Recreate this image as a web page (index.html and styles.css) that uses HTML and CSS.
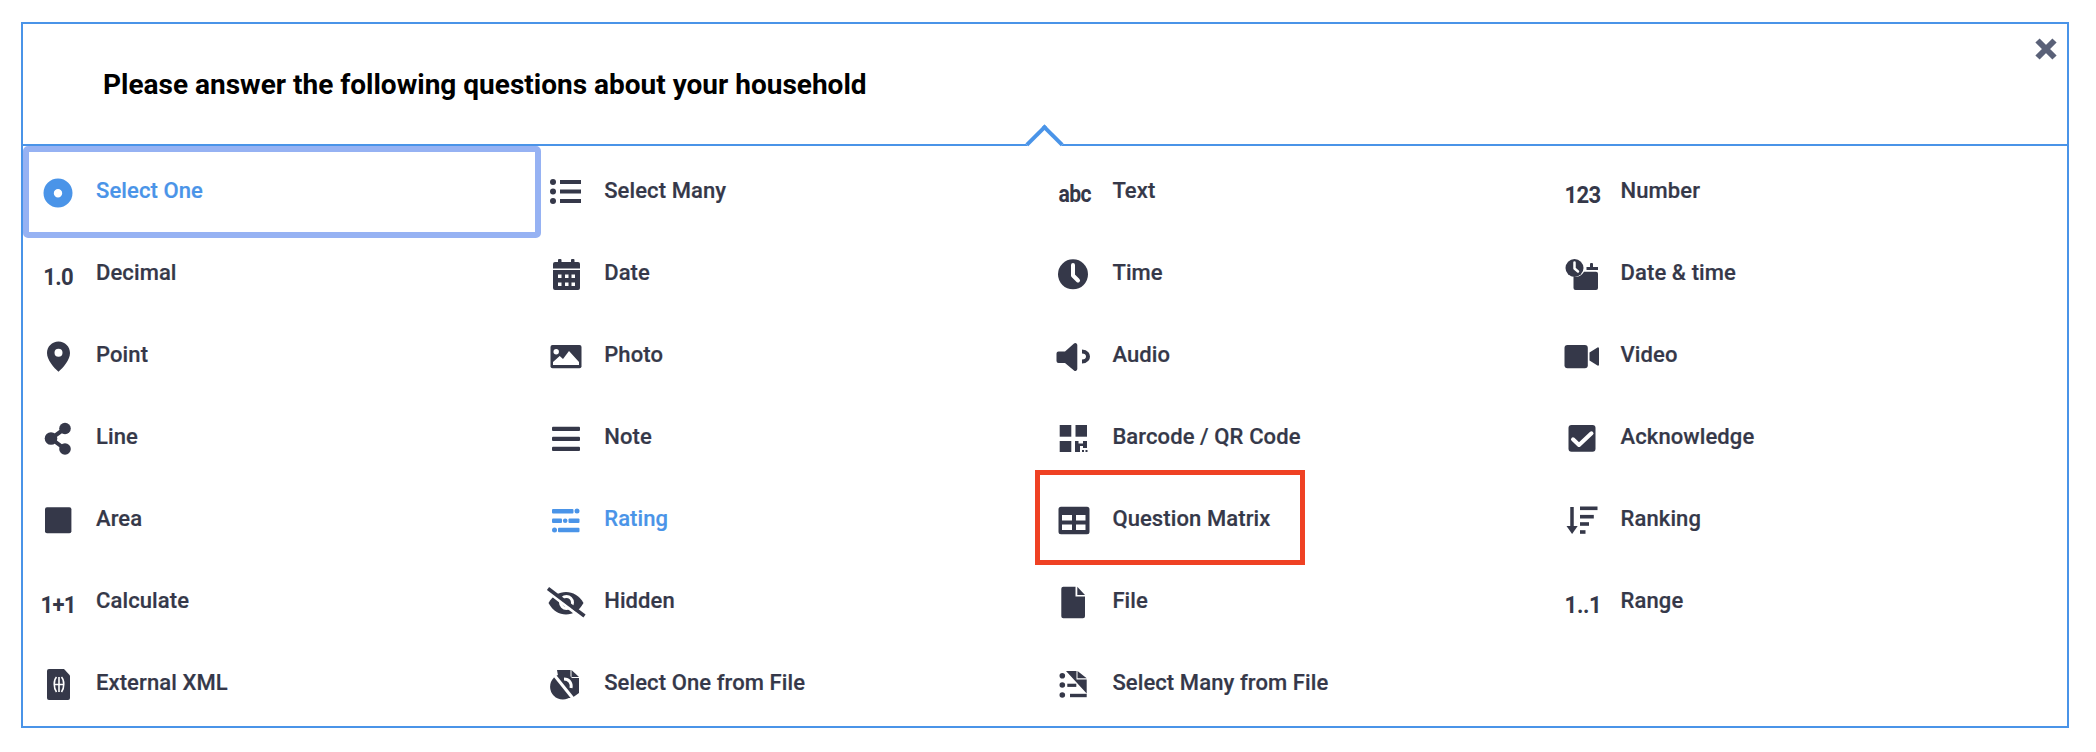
FILE: index.html
```html
<!DOCTYPE html>
<html lang="en">
<head>
    <meta charset="UTF-8">
    <title>Question types</title>
    <link rel="stylesheet" href="styles.css">
</head>
<body>
    <div class="chooser">
        <div class="chooser-head">
            <h1 class="chooser-title">Please answer the following questions about your household</h1>
            <span class="chooser-caret"></span>
            <svg class="chooser-close" viewBox="0 0 24 24"><path d="M3.5 3.5l17 17M20.5 3.5l-17 17"/></svg>
        </div>

        <div class="type-grid">
            <!-- row 1 -->
            <div class="type-item is-selected is-accent">
                <span class="type-icon"><svg viewBox="0 0 36 36"><path fill-rule="evenodd" d="M18 5.5a14.5 14.5 0 1 0 0 29 14.5 14.5 0 0 0 0-29zm0 10.500a4.200 4.200 0 1 1 0 8.400 4.200 4.200 0 0 1 0-8.400z"/></svg></span>
                <span class="type-label">Select One</span>
            </div>
            <div class="type-item">
                <span class="type-icon"><svg viewBox="0 0 36 36"><circle cx="5" cy="9" r="3"/><circle cx="5" cy="18.500" r="3"/><circle cx="5" cy="28" r="3"/><rect x="12" y="7" width="21" height="4"/><rect x="12" y="16.500" width="21" height="4"/><rect x="12" y="26" width="21" height="4"/></svg></span>
                <span class="type-label">Select Many</span>
            </div>
            <div class="type-item">
                <span class="type-icon"><span class="icon-text icon-abc">abc</span></span>
                <span class="type-label">Text</span>
            </div>
            <div class="type-item">
                <span class="type-icon"><span class="icon-text">123</span></span>
                <span class="type-label">Number</span>
            </div>

            <!-- row 2 -->
            <div class="type-item">
                <span class="type-icon"><span class="icon-text">1.0</span></span>
                <span class="type-label">Decimal</span>
            </div>
            <div class="type-item">
                <span class="type-icon"><svg viewBox="0 0 36 36"><rect x="10" y="4" width="3.500" height="5" rx="1"/><rect x="23" y="4" width="3.500" height="5" rx="1"/><path d="M7 7h23a2 2 0 0 1 2 2v4.500H5V9a2 2 0 0 1 2-2z"/><path fill-rule="evenodd" d="M5 15h27v18a2 2 0 0 1-2 2H7a2 2 0 0 1-2-2zm5 4.500v3.500h3.500v-3.500zm7 0v3.500h3.500v-3.500zm6.500 0v3.500h3.500v-3.500zm-13.500 8v3.500h3.500v-3.500zm7 0v3.500h3.500v-3.500zm6.500 0v3.500h3.500v-3.500z"/></svg></span>
                <span class="type-label">Date</span>
            </div>
            <div class="type-item">
                <span class="type-icon"><svg viewBox="0 0 36 36"><circle cx="17" cy="19.300" r="15"/><path class="cut" d="M17 10v10.500l5 5" stroke-width="4"/></svg></span>
                <span class="type-label">Time</span>
            </div>
            <div class="type-item">
                <span class="type-icon"><svg viewBox="0 0 36 36"><rect x="25" y="8" width="3" height="5" rx="1"/><rect x="21.500" y="12" width="11.500" height="3"/><path d="M19 16.700h12a2 2 0 0 1 2 2V33a2 2 0 0 1-2 2H10.500a2 2 0 0 1-2-2V22a11 11 0 0 0 10.500-5.300z"/><circle cx="9.500" cy="13" r="9"/><path class="cut" d="M9.500 7.500v6l3.500 3" stroke-width="2.500"/></svg></span>
                <span class="type-label">Date &amp; time</span>
            </div>

            <!-- row 3 -->
            <div class="type-item">
                <span class="type-icon"><svg viewBox="0 0 36 36"><path fill-rule="evenodd" d="M18.500 4.500C12 4.500 7 9.700 7 16c0 7 7 15 11.500 18.700C23 31 30 23 30 16c0-6.300-5-11.500-11.500-11.500zm0 7.200a4 4 0 1 1 0 8 4 4 0 0 1 0-8z"/></svg></span>
                <span class="type-label">Point</span>
            </div>
            <div class="type-item">
                <span class="type-icon"><svg viewBox="0 0 36 36"><rect x="2.500" y="8" width="31" height="23.300" rx="2"/><circle class="hole" cx="8.200" cy="14.700" r="2.700"/><path class="hole" d="M5 28v-3l6.700-6 3.300 3 6-8 10 11v3z"/></svg></span>
                <span class="type-label">Photo</span>
            </div>
            <div class="type-item">
                <span class="type-icon"><svg viewBox="0 0 36 36"><path d="M2.500 14.500H9l9-8a2 2 0 0 1 3.300 1.500v24a2 2 0 0 1-3.300 1.500L9 26H2.500a2 2 0 0 1-2-2v-7.500a2 2 0 0 1 2-2z"/><path class="line" d="M26 14.500c5 0 6 3.500 6 5s-1 5-6 5" stroke-width="4"/></svg></span>
                <span class="type-label">Audio</span>
            </div>
            <div class="type-item">
                <span class="type-icon"><svg viewBox="0 0 36 36"><rect x="-0.500" y="8" width="23.300" height="23.300" rx="3"/><path d="M24.500 15.500l8-5a1 1 0 0 1 1.500 1v16a1 1 0 0 1-1.500 1l-8-5z"/></svg></span>
                <span class="type-label">Video</span>
            </div>

            <!-- row 4 -->
            <div class="type-item">
                <span class="type-icon"><svg viewBox="0 0 36 36"><circle cx="25" cy="9.500" r="5.800"/><circle cx="11" cy="19.500" r="6.300"/><circle cx="25" cy="30" r="5.800"/><path class="line" d="M25 9.500L11 19.500 25 30" stroke-width="4"/></svg></span>
                <span class="type-label">Line</span>
            </div>
            <div class="type-item">
                <span class="type-icon"><svg viewBox="0 0 36 36"><rect x="4" y="7.700" width="28" height="4.400" rx="1"/><rect x="4" y="17.700" width="28" height="4.400" rx="1"/><rect x="4" y="27.700" width="28" height="4.400" rx="1"/></svg></span>
                <span class="type-label">Note</span>
            </div>
            <div class="type-item">
                <span class="type-icon"><svg viewBox="0 0 36 36"><rect x="3.700" y="6" width="11.600" height="11.700"/><rect x="19.500" y="6" width="11.500" height="11.700"/><rect x="3.700" y="22" width="11.600" height="11"/><path d="M19 22h3.500v2.500H27V22h4v7h-4v-2h-3v6h-5z"/><rect x="26" y="31" width="2" height="2"/><rect x="29.500" y="31" width="2" height="2"/></svg></span>
                <span class="type-label">Barcode / QR Code</span>
            </div>
            <div class="type-item">
                <span class="type-icon"><svg viewBox="0 0 36 36"><rect x="3.500" y="6" width="27" height="26.700" rx="3"/><path class="cut" d="M8 20.300l6 5.700 12.500-11.700" stroke-width="4"/></svg></span>
                <span class="type-label">Acknowledge</span>
            </div>

            <!-- row 5 -->
            <div class="type-item">
                <span class="type-icon"><svg viewBox="0 0 36 36"><rect x="5" y="6.300" width="26.400" height="26" rx="2"/></svg></span>
                <span class="type-label">Area</span>
            </div>
            <div class="type-item is-accent">
                <span class="type-icon"><svg viewBox="0 0 36 36"><rect x="4" y="8" width="21.500" height="4.400" rx="1"/><circle cx="29" cy="10" r="2.500"/><rect x="4" y="17.500" width="10" height="4.400" rx="1"/><circle cx="17.200" cy="19.700" r="2.300"/><rect x="20.500" y="17.500" width="11" height="4.400" rx="1"/><circle cx="6.500" cy="29" r="2.500"/><rect x="10" y="26.800" width="21.500" height="4.400" rx="1"/></svg></span>
                <span class="type-label">Rating</span>
            </div>
            <div class="type-item is-callout">
                <span class="type-icon"><svg viewBox="0 0 36 36"><path fill-rule="evenodd" d="M5 5.700h26a2.500 2.500 0 0 1 2.500 2.500v22.600a2.500 2.500 0 0 1-2.500 2.500H5a2.500 2.500 0 0 1-2.500-2.500V8.200A2.500 2.500 0 0 1 5 5.700zm1 8.300v5.500h10V14zm14 0v5.500h9.500V14zM6 23.500V29h10v-5.500zm14 0V29h9.500v-5.500z"/></svg></span>
                <span class="type-label">Question Matrix</span>
            </div>
            <div class="type-item">
                <span class="type-icon"><svg viewBox="0 0 36 36"><path class="line" d="M7 6v21" stroke-width="3.500"/><path d="M1.500 25h11.200l-5.600 8z"/><rect x="15" y="5.500" width="17.500" height="3.600"/><rect x="15" y="13.900" width="13.800" height="3.600"/><rect x="15" y="21.200" width="9" height="3.600"/><rect x="15" y="29.200" width="5.500" height="3.600"/></svg></span>
                <span class="type-label">Ranking</span>
            </div>

            <!-- row 6 -->
            <div class="type-item">
                <span class="type-icon"><span class="icon-text">1+1</span></span>
                <span class="type-label">Calculate</span>
            </div>
            <div class="type-item">
                <span class="type-icon"><svg viewBox="0 0 36 36"><path d="M0.500 20C5 12.500 11 9 18 9s13 3.500 17.500 11C31 28 25 31.500 18 31.500S5 28 .5 20z"/><circle class="line-cut" cx="18.500" cy="19.500" r="6"/><path class="line-cut" d="M-1 8l36 28" stroke-width="7"/><path class="line" d="M0 5.500l36.500 27.500" stroke-width="3.600"/></svg></span>
                <span class="type-label">Hidden</span>
            </div>
            <div class="type-item">
                <span class="type-icon"><svg viewBox="0 0 36 36"><path d="M7.300 3.700h12.200v9.800H29v19.800a2 2 0 0 1-2 2H7.300a2 2 0 0 1-2-2V5.700a2 2 0 0 1 2-2z"/><path d="M21.300 3.700L29 12h-7.700z"/></svg></span>
                <span class="type-label">File</span>
            </div>
            <div class="type-item">
                <span class="type-icon"><span class="icon-text icon-range">1..1</span></span>
                <span class="type-label">Range</span>
            </div>

            <!-- row 7 -->
            <div class="type-item">
                <span class="type-icon"><svg viewBox="0 0 36 36"><path d="M9 4h15l6 6.500V33a2 2 0 0 1-2 2H9a2 2 0 0 1-2-2V6a2 2 0 0 1 2-2z"/><path class="line-thin" d="M16.500 12c-3 3-3 11 0 15M21.500 12c3 3 3 11 0 15M19 12v15M15 19.500h8"/></svg></span>
                <span class="type-label">External XML</span>
            </div>
            <div class="type-item">
                <span class="type-icon"><svg viewBox="0 0 36 36"><circle cx="14.800" cy="21.700" r="12.700"/><path d="M9 5h13.500v8H31v15l-7 5H14z"/><path d="M23.500 5l7.500 7h-7.500z"/><path class="line-cut" d="M3 6l24 30" stroke-width="2.600"/><path class="line-cut" d="M16 14c5 0 8 4 7 9" stroke-width="2.400"/></svg></span>
                <span class="type-label">Select One from File</span>
            </div>
            <div class="type-item">
                <span class="type-icon"><svg viewBox="0 0 36 36"><circle cx="6.300" cy="10.700" r="2.800"/><circle cx="6.300" cy="20" r="2.800"/><circle cx="6.300" cy="30" r="2.800"/><path d="M10 6h10.500v8.500h10.200V28.500z"/><path d="M21.500 6l9.200 7.200h-9.200z"/><rect x="14" y="28.800" width="16.700" height="3.400"/><rect x="11.300" y="18.700" width="9" height="3.200"/></svg></span>
                <span class="type-label">Select Many from File</span>
            </div>
        </div>
    </div>
</body>
</html>
```
FILE: styles.css
```css
/* page */
body {
    margin: 22px 27px 24px 21px;
    background: #ffffff;
    font-family: Roboto, "Liberation Sans", sans-serif;
    color: #353849;
}

/* outer frame */
.chooser {
    box-sizing: border-box;
    height: 706px;
    border: 2px solid #4a94e8;
}

.chooser-head {
    position: relative;
    height: 122px;
    box-sizing: border-box;
    border-bottom: 2px solid #4a94e8;
    padding-left: 80px;
    display: flex;
    align-items: center;
}

.chooser-title {
    margin: 0;
    font-size: 28px;
    font-weight: 700;
    color: #000000;
}

/* little arrow sitting on the header line */
.chooser-caret {
    position: absolute;
    left: 1008px;
    top: 106px;
    width: 27px;
    height: 27px;
    box-sizing: border-box;
    background: #ffffff;
    border-top: 4px solid #4a94e8;
    border-left: 4px solid #4a94e8;
    transform: rotate(45deg);
}

.chooser-close {
    position: absolute;
    right: 9px;
    top: 13px;
    width: 24px;
    height: 24px;
    fill: none;
    stroke: #5a6178;
    stroke-width: 6;
}

/* question types */
.type-grid {
    display: grid;
    grid-template-columns: repeat(4, 508.2px);
    grid-auto-rows: 82px;
    padding: 4px 4px 2px 6px;
}

.type-item {
    position: relative;
    display: flex;
    align-items: center;
}

.type-icon {
    width: 58px;
    height: 36px;
    flex: none;
    display: flex;
    justify-content: center;
    align-items: center;
}

.type-icon svg {
    width: 36px;
    height: 36px;
    overflow: visible;
    fill: currentColor;
}

.type-label {
    margin: 0 0 2px 9px;
    font-size: 22px;
    font-weight: 500;
    letter-spacing: 0.1px;
    -webkit-text-stroke: 0.2px currentColor;
}

.icon-text {
    padding-top: 8px;
    font-size: 24px;
    font-weight: 700;
    letter-spacing: -0.8px;
    transform: scaleX(0.92);
}

.icon-abc {
    padding-top: 6px;
    font-size: 23px;
    letter-spacing: -0.6px;
}

.icon-range {
    letter-spacing: -0.4px;
}

/* svg helpers */
.type-icon .cut {
    fill: none;
    stroke: #ffffff;
    stroke-linecap: round;
    stroke-linejoin: round;
}

.type-icon .hole {
    fill: #ffffff;
}

.type-icon .line {
    fill: none;
    stroke: currentColor;
}

.type-icon .line-cut {
    fill: none;
    stroke: #ffffff;
    stroke-width: 3;
}

.type-icon .line-thin {
    fill: none;
    stroke: #ffffff;
    stroke-width: 1.6;
}

/* states */
.is-accent {
    color: #4a94e8;
}

.is-selected::before {
    content: "";
    position: absolute;
    top: -4px;
    right: -4px;
    bottom: -6px;
    left: -6px;
    border: 6px solid #96b2f3;
    border-radius: 5px;
}

.is-callout::before {
    content: "";
    position: absolute;
    top: -8px;
    bottom: -5px;
    left: -10px;
    width: 270px;
    box-sizing: border-box;
    border: 5px solid #ef4123;
}
```
